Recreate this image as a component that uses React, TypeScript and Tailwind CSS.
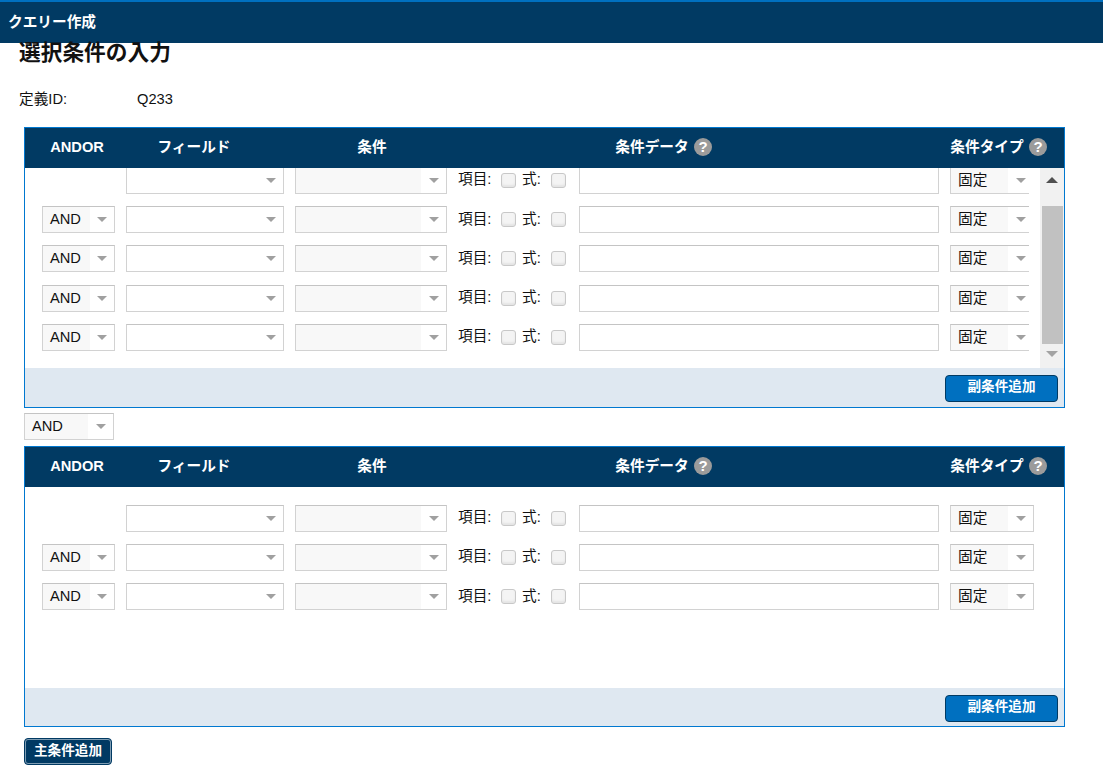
const FONT = "font-['Liberation_Sans','Noto_Sans_CJK_JP',sans-serif]";

function Arrow({ className = "" }: { className?: string }) {
  return (
    <svg width="10" height="5" viewBox="0 0 10 5" className={className}>
      <polygon points="0,0 10,0 5,5" fill="#a0a0a0" />
    </svg>
  );
}

function Select({ value, width, tint }: { value?: string; width: string; tint?: string }) {
  return (
    <div className={`${width} h-[27px] flex-shrink-0 flex border border-[#d2d2d2] border-t-[#c4c4c4] bg-white`}>
      <div className={`${tint ?? "flex-1"} ${tint ? "bg-[#f8f8f8]" : ""} pl-[7px] text-[14.67px] leading-[25px] text-[#111]`}>{value}</div>
      <div className={`${tint ? "flex-1" : "w-[25px]"} flex items-center justify-center`}>
        <Arrow />
      </div>
    </div>
  );
}

function Check() {
  return (
    <input
      type="checkbox"
      className="appearance-none w-[15px] h-[15px] rounded-[3px] border border-[#c8c8c8] bg-[#f4f4f4] shadow-[inset_0_-2px_2px_#e4e4e4] flex-shrink-0"
    />
  );
}

function Help() {
  return (
    <span className="ml-[5px] w-[18px] h-[18px] flex-shrink-0 rounded-full bg-[#9b9b9b] text-white text-[15px] font-bold leading-[18px] text-center inline-block">
      ?
    </span>
  );
}

function Row({ first }: { first?: boolean }) {
  return (
    <div className="flex items-center h-[27px] pl-[17px] w-[1030px] flex-shrink-0">
      {first ? <div className="w-[73px] flex-shrink-0" /> : <Select value="AND" width="w-[73px]" tint="w-[47px]" />}
      <div className="ml-[11px]"><Select width="w-[158px]" /></div>
      <div className="ml-[11px]"><Select width="w-[152px]" tint="w-[125px]" /></div>
      <span className="ml-[11px] w-[43px] text-[14.67px] leading-[24px] pb-[2px] text-[#111] whitespace-nowrap">項目:</span>
      <Check />
      <span className="ml-[6px] w-[29px] text-[14.67px] leading-[24px] pb-[2px] text-[#111] whitespace-nowrap">式:</span>
      <Check />
      <input type="text" className="ml-[13px] w-[360px] h-[27px] flex-shrink-0 border border-[#d2d2d2] border-t-[#c4c4c4] bg-white" />
      <div className="ml-[11px]"><Select value="固定" width="w-[84px]" tint="w-[57px]" /></div>
    </div>
  );
}

function PanelHeader() {
  return (
    <div className="h-[40px] pb-[2px] bg-[#013a63] flex items-center text-white text-[14.67px] font-bold whitespace-nowrap">
      <div className="w-[104px] flex-shrink-0 text-center">ANDOR</div>
      <div className="w-[130px] flex-shrink-0 text-center">フィールド</div>
      <div className="w-[226px] flex-shrink-0 text-center">条件</div>
      <div className="w-[357px] flex-shrink-0 pl-[130px] flex items-center">
        <span className="w-[74px] text-center">条件データ</span>
        <Help />
      </div>
      <div className="w-[222px] flex-shrink-0 pl-[108px] flex items-center">
        <span className="w-[74px] text-center">条件タイプ</span>
        <Help />
      </div>
    </div>
  );
}

function FooterBar({ h }: { h: string }) {
  return (
    <div className={`${h} bg-[#dfe8f1] flex justify-end pt-[7px] pr-[6px]`}>
      <button className="w-[113px] h-[27px] pb-[2px] rounded-[4px] bg-[#0070c0] border border-[#013a63] text-white text-[13.6px] font-bold">
        副条件追加
      </button>
    </div>
  );
}

export default function App() {
  return (
    <div className={`${FONT} w-[1103px] h-[771px] bg-white overflow-hidden`}>
      <header className="h-[43px] pb-[2px] bg-[#013a63] border-t-2 border-[#0070c0] flex items-center pl-[8px] text-white text-[14.67px] font-bold">
        クエリー作成
      </header>

      <h2 className="ml-[19px] -mt-[1px] text-[21.7px] leading-[22px] font-bold text-[#111]">選択条件の入力</h2>

      <div className="ml-[19px] mt-[24px] flex text-[14.67px] leading-[22px] text-[#111]">
        <span className="w-[118px]">定義ID:</span>
        <span>Q233</span>
      </div>

      {/* Panel 1 (scrolled) */}
      <section className="ml-[24px] mt-[17px] w-[1041px] h-[281px] border border-[#0078d0]">
        <PanelHeader />
        <div className="h-[200px] flex overflow-hidden">
          <div className="w-[1004px] overflow-hidden flex flex-col gap-[12.33px] -mt-[1.33px]">
            <Row first />
            <Row />
            <Row />
            <Row />
            <Row />
          </div>
          <div className="ml-[11px] w-[24px] bg-[#f1f1f1] flex flex-col items-center">
            <svg width="12" height="6" viewBox="0 0 12 6" className="mt-[9px]">
              <polygon points="0,6 12,6 6,0" fill="#505050" />
            </svg>
            <div className="mt-[23px] w-[21px] h-[138px] bg-[#c1c1c1] ml-[1px]" />
            <svg width="12" height="6" viewBox="0 0 12 6" className="mt-[7px]">
              <polygon points="0,0 12,0 6,6" fill="#a3a3a3" />
            </svg>
          </div>
        </div>
        <FooterBar h="h-[39px]" />
      </section>

      <div className="ml-[24px] mt-[5px]">
        <Select value="AND" width="w-[90px]" tint="w-[63px]" />
      </div>

      {/* Panel 2 */}
      <section className="ml-[24px] mt-[6px] w-[1041px] h-[281px] border border-[#0078d0]">
        <PanelHeader />
        <div className="h-[201px] pt-[17.6px] flex flex-col gap-[12.33px] overflow-hidden">
          <Row first />
          <Row />
          <Row />
        </div>
        <FooterBar h="h-[38px]" />
      </section>

      <button className="block ml-[24px] mt-[11px] w-[88px] h-[27px] rounded-[4px] bg-[#013a63] border border-[#013a63] outline outline-1 -outline-offset-2 outline-[#7f9db3] text-white text-[13.6px] font-bold">
        主条件追加
      </button>
    </div>
  );
}
